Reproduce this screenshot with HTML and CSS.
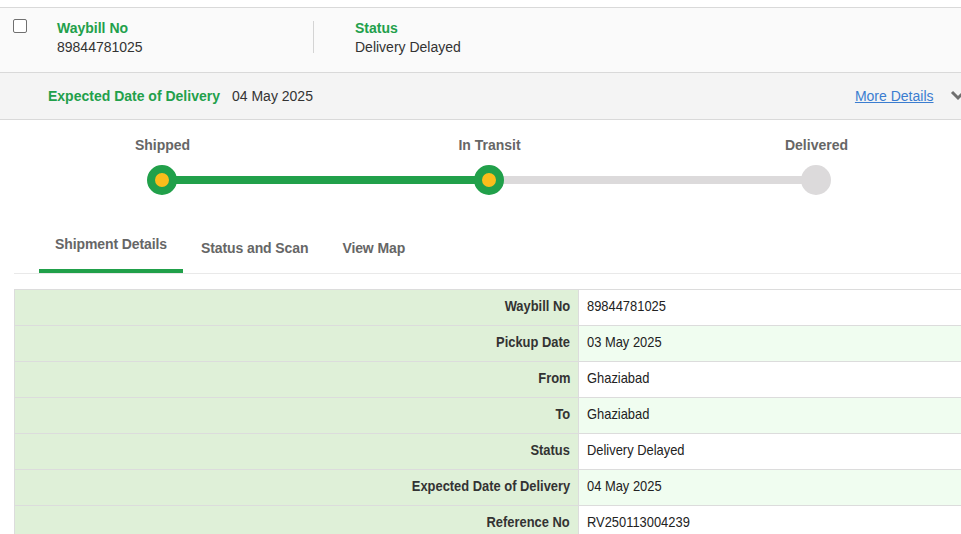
FILE: index.html
```html
<!DOCTYPE html>
<html>
<head>
<meta charset="utf-8">
<link rel="stylesheet" href="styles.css">
</head>
<body>
<div class="card">
  <div class="head">
    <span class="check"></span>
    <div class="field first">
      <div class="lbl">Waybill No</div>
      <div class="val">89844781025</div>
    </div>
    <div class="divider"></div>
    <div class="field">
      <div class="lbl">Status</div>
      <div class="val">Delivery Delayed</div>
    </div>
  </div>
  <div class="edd">
    <span class="lbl">Expected Date of Delivery</span>
    <span class="val">04 May 2025</span>
    <a class="more" href="#">More Details</a>
    <svg class="chev" width="16" height="12" viewBox="0 0 16 12"><path d="M2 3 L8 9 L14 3" fill="none" stroke="#6f6f6f" stroke-width="3"/></svg>
  </div>
</div>

<div class="progress">
  <div class="labels">
    <span>Shipped</span>
    <span>In Transit</span>
    <span>Delivered</span>
  </div>
  <div class="track">
    <span class="dot done"></span>
    <span class="seg done"></span>
    <span class="dot done"></span>
    <span class="seg"></span>
    <span class="dot"></span>
  </div>
</div>

<div class="tabs">
  <div class="tab active">Shipment Details</div>
  <div class="tab">Status and Scan</div>
  <div class="tab">View Map</div>
</div>

<table class="details">
  <tr><th><span>Waybill No</span></th><td><span>89844781025</span></td></tr>
  <tr class="alt"><th><span>Pickup Date</span></th><td><span>03 May 2025</span></td></tr>
  <tr><th><span>From</span></th><td><span>Ghaziabad</span></td></tr>
  <tr class="alt"><th><span>To</span></th><td><span>Ghaziabad</span></td></tr>
  <tr><th><span>Status</span></th><td><span>Delivery Delayed</span></td></tr>
  <tr class="alt"><th><span>Expected Date of Delivery</span></th><td><span>04 May 2025</span></td></tr>
  <tr><th><span>Reference No</span></th><td><span>RV250113004239</span></td></tr>
</table>
</body>
</html>
```

FILE: styles.css
```css
html, body {
  margin: 0;
  padding: 0;
  overflow: hidden;
  background: #fff;
  font-family: "Liberation Sans", Arial, sans-serif;
  font-size: 14px;
  color: #333;
}

.card {
  margin-top: 7px;
  border-top: 1px solid #d9d9d9;
  width: 1000px;
}

.head {
  display: flex;
  align-items: flex-start;
  height: 65px;
  box-sizing: border-box;
  padding-top: 11px;
  background: #fafafa;
  border-bottom: 1px solid #d9d9d9;
}

.check {
  width: 14px;
  height: 14px;
  box-sizing: border-box;
  border: 1px solid #707070;
  border-radius: 2px;
  background: #fff;
  margin: 0 0 0 13px;
}

.field {
  line-height: 19px;
}
.field.first {
  margin-left: 30px;
  width: 256px;
}
.field .lbl {
  color: #22a04b;
  font-weight: bold;
}
.field .val {
  color: #333;
}
.divider {
  width: 1px;
  height: 32px;
  margin-top: 2px;
  background: #d4d4d4;
  margin-right: 41px;
}

.edd {
  display: flex;
  align-items: center;
  height: 46px;
  background: #f4f4f4;
  border-bottom: 1px solid #d9d9d9;
  padding-left: 48px;
}
.edd .lbl {
  color: #22a04b;
  font-weight: bold;
}
.edd .val {
  margin-left: 12px;
  color: #333;
}
.edd .more {
  margin-left: 542px;
  color: #3b7dd0;
  text-decoration: underline;
}
.edd .chev {
  margin-left: 16px;
  margin-top: -2px;
}

.progress {
  padding-top: 15px;
}
.labels {
  display: grid;
  grid-template-columns: repeat(3, 327px);
  margin-left: -1px;
  font-weight: bold;
  color: #666;
  line-height: 20px;
  text-align: center;
}
.track {
  display: flex;
  align-items: center;
  margin-top: 10px;
  margin-left: 147px;
}
.dot {
  width: 30px;
  height: 30px;
  border-radius: 50%;
  background: #dcdadb;
  box-sizing: border-box;
  position: relative;
  z-index: 1;
}
.dot.done {
  background: #fbbd1b;
  border: 8px solid #21a04a;
}
.seg {
  width: 299px;
  height: 8px;
  margin: 0 -1px;
  background: #dcdadb;
}
.seg.done {
  background: #21a04a;
}

.tabs {
  display: flex;
  gap: 2px;
  margin: 35px 0 0 14px;
  padding-left: 25px;
  border-bottom: 1px solid #e9e9e9;
  height: 44px;
  box-sizing: border-box;
}
.tab {
  padding: 8px 16px 0;
  font-weight: bold;
  color: #666;
  line-height: 20px;
  letter-spacing: -0.1px;
}
.tab.active {
  padding-top: 4px;
  height: 43px;
  box-sizing: border-box;
  border-bottom: 4px solid #21a04a;
}

.details {
  margin: 15px 0 0 14px;
  border-collapse: collapse;
  width: 1000px;
  font-size: 15px;
}
.details th, .details td {
  border: 1px solid #dcdcdc;
  height: 36px;
  padding: 0 8px 4px;
  box-sizing: border-box;
}
.details span {
  display: inline-block;
  transform: scaleX(0.86);
  transform-origin: left center;
  white-space: nowrap;
}
.details th {
  width: 564px;
  background: #dff0d8;
  text-align: right;
  font-weight: bold;
  color: #333;
}
.details th span {
  transform-origin: right center;
}
.details td {
  background: #fff;
  color: #222;
  text-align: left;
}
.details tr.alt td {
  background: #f0fdf0;
}
```
